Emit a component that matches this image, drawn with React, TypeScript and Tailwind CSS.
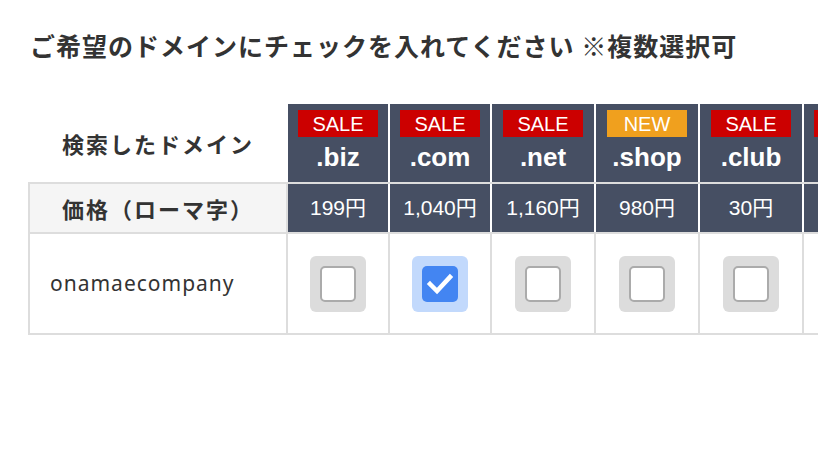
import React from 'react'

type Domain = {
  badge: 'SALE' | 'NEW'
  tld: string
  price: string
  width: string
  checked: boolean
}

const domains: Domain[] = [
  { badge: 'SALE', tld: '.biz', price: '199円', width: 'w-[102px]', checked: false },
  { badge: 'SALE', tld: '.com', price: '1,040円', width: 'w-[102px]', checked: true },
  { badge: 'SALE', tld: '.net', price: '1,160円', width: 'w-[104px]', checked: false },
  { badge: 'NEW', tld: '.shop', price: '980円', width: 'w-[104px]', checked: false },
  { badge: 'SALE', tld: '.club', price: '30円', width: 'w-[104px]', checked: false },
]

const jp = "font-['Noto_Sans_CJK_JP',sans-serif]"
const latin = "font-['Liberation_Sans','Noto_Sans_CJK_JP',sans-serif]"

const Checkbox = ({ checked }: { checked: boolean }) => {
  if (checked) {
    return (
      <div className="w-14 h-14 rounded-md bg-[#c2d9fc] flex items-center justify-center">
        <div className="w-9 h-9 rounded-[5px] bg-[#4385f2] flex items-center justify-center">
          <svg width="28" height="28" viewBox="0 0 28 28">
            <polyline
              points="4,14 11,21 24,7"
              fill="none"
              stroke="white"
              strokeWidth="4.5"
              strokeLinecap="square"
              strokeLinejoin="miter"
            />
          </svg>
        </div>
      </div>
    )
  }
  return (
    <div className="w-14 h-14 rounded-md bg-[#dcdcdc] flex items-center justify-center">
      <div className="w-9 h-9 rounded-[5px] bg-white border-2 border-[#ababab]" />
    </div>
  )
}

export default function App() {
  return (
    <div className={`w-[818px] h-[458px] overflow-hidden bg-white text-[#333] ${jp}`}>
      <h1 className="pl-[30px] pt-[28px] text-[25px] leading-[34px] font-bold tracking-[1px] whitespace-nowrap">
        ご希望のドメインにチェックを入れてください ※複数選択可
      </h1>

      <div className="ml-[28px] mt-[42px] flex flex-col w-max">
        {/* header */}
        <div className="flex h-[78px]">
          <div className="w-[260px] flex items-center justify-center text-[22px] font-bold tracking-[2px]">
            検索したドメイン
          </div>
          {domains.map((d) => (
            <div key={d.tld} className={`${d.width} border-r-2 border-white bg-[#464f63] flex flex-col items-center pt-[6px]`}>
              <div
                className={`w-[80px] h-[27px] flex items-center justify-center text-white text-[20px] ${latin} ${
                  d.badge === 'NEW' ? 'bg-[#f0a01e]' : 'bg-[#cc0000]'
                }`}
              >
                {d.badge}
              </div>
              <div className={`mt-[3px] text-white text-[26px] leading-[34px] font-bold ${latin}`}>
                {d.tld}
              </div>
            </div>
          ))}
          {/* column cut off by the window edge */}
          <div className="w-[104px] bg-[#464f63] pt-[6px] pl-[10px]">
            <div className="w-[80px] h-[27px] bg-[#cc0000]" />
          </div>
        </div>

        {/* price */}
        <div className="flex h-[52px] border-t-2 border-b-2 border-[#dddddd]">
          <div className="w-[260px] bg-[#f5f5f5] border-l-2 border-r-2 border-[#dddddd] flex items-center justify-center text-[22px] font-bold tracking-[2px]">
            価格（ローマ字）
          </div>
          {domains.map((d) => (
            <div key={d.tld} className={`${d.width} border-r-2 border-white bg-[#464f63] flex items-center justify-center text-white text-[21px] ${latin}`}>
              {d.price}
            </div>
          ))}
          <div className="w-[104px] bg-[#464f63]" />
        </div>

        {/* domain row */}
        <div className="flex h-[101px] border-b-2 border-[#dddddd]">
          <div className="w-[260px] border-l-2 border-r-2 border-[#dddddd] flex items-center pl-[20px] text-[21px] tracking-[1px] font-['Noto_Sans',sans-serif]">
            onamaecompany
          </div>
          {domains.map((d) => (
            <div key={d.tld} className={`${d.width} border-r-2 border-[#dddddd] flex items-center justify-center`}>
              <Checkbox checked={d.checked} />
            </div>
          ))}
          <div className="w-[104px]" />
        </div>
      </div>
    </div>
  )
}
